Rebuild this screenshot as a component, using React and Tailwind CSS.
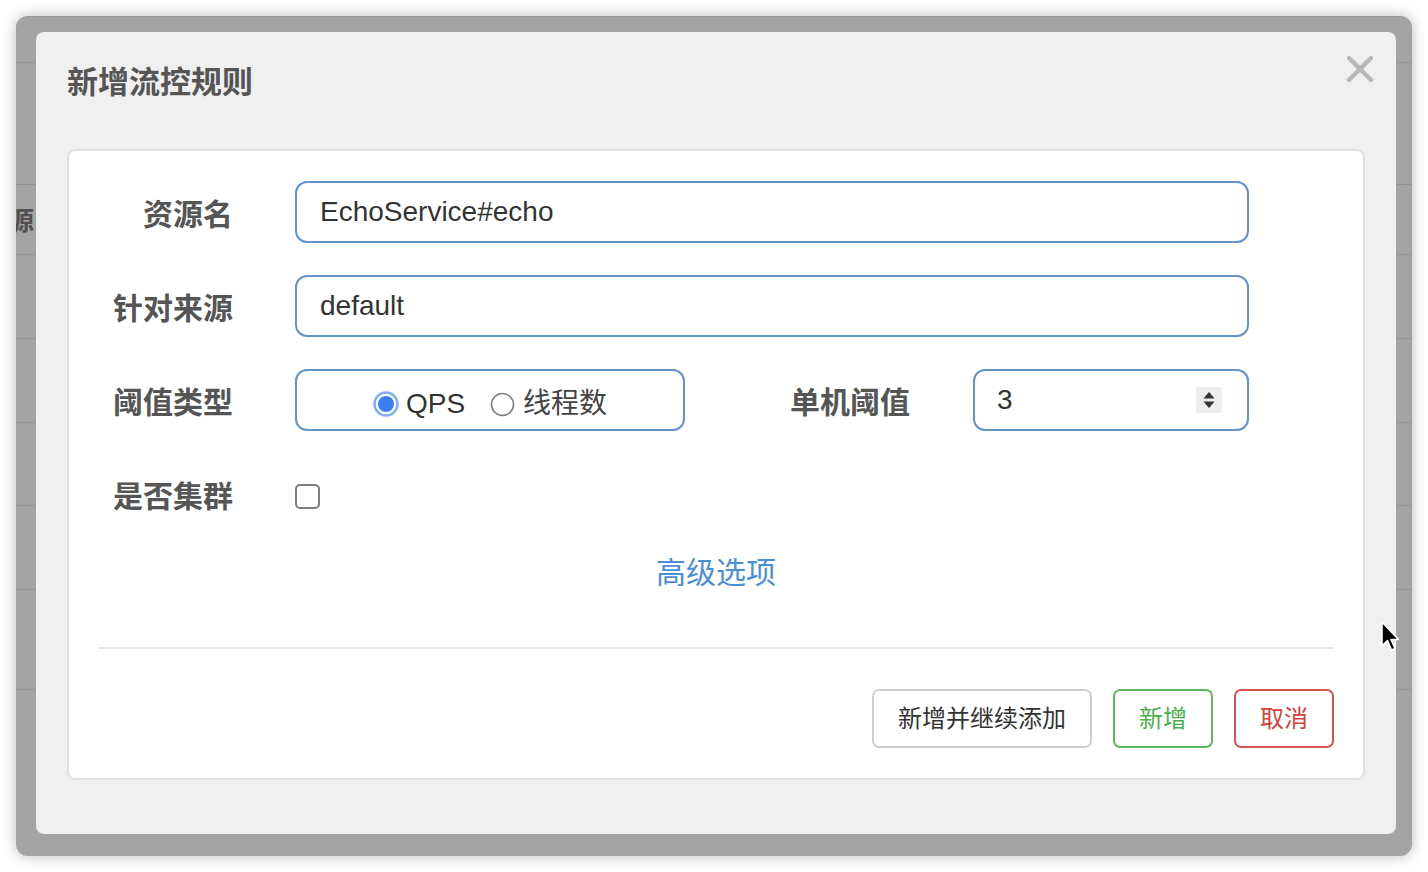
import React from "react";

const bgLines = [45, 167, 237, 321, 405, 488, 572, 672];

const RadioOn = () => (
  <svg width="26" height="26" viewBox="0 0 26 26">
    <circle cx="13" cy="13" r="11.5" fill="#fff" stroke="#7fb0f6" strokeWidth="2.5" />
    <circle cx="13" cy="13" r="8" fill="#3b7ef2" />
  </svg>
);

const RadioOff = () => (
  <svg width="25" height="25" viewBox="0 0 25 25">
    <circle cx="12.5" cy="12.5" r="11" fill="#fff" stroke="#7a7a7a" strokeWidth="1.5" />
  </svg>
);

const Label = ({ children, className = "" }) => (
  <div className={`text-right text-[30px] leading-[40px] pt-[6px] font-bold text-[#555] ${className}`}>
    {children}
  </div>
);

export default function App() {
  return (
    <div className="w-[1428px] h-[872px] bg-white p-[16px] font-['Liberation_Sans','Noto_Sans_CJK_SC',sans-serif] relative">
      {/* dimmed page behind the modal */}
      <div className="relative w-[1396px] h-[840px] rounded-[12px] bg-[#a4a4a4] border-t border-[#999] shadow-[0_0_14px_rgba(0,0,0,0.28)] overflow-hidden pl-[20px] pt-[15px]">
        <div className="absolute inset-0">
          {bgLines.map((t) => (
            <div key={t} className="absolute left-0 right-0 h-[1px] bg-[#949494]" style={{ top: t }} />
          ))}
          <div className="absolute left-[-8px] top-[188px] text-[26px] leading-[32px] font-bold text-[#4f4f4f]">源</div>
        </div>

        {/* dialog */}
        <div className="relative w-[1360px] h-[802px] rounded-[8px] bg-[#f0f0f0]">
          <div className="flex justify-between items-start pl-[31px] pr-[23px] pt-[24px]">
            <div className="mt-[7px] text-[31px] leading-[40px] font-bold text-[#555]">新增流控规则</div>
            <svg width="26" height="26" viewBox="0 0 26 26">
              <path d="M2 2 L24 24 M24 2 L2 24" stroke="#b8b8b8" strokeWidth="4.5" strokeLinecap="round" />
            </svg>
          </div>

          <div className="ml-[31px] mt-[46px] w-[1298px] h-[631px] bg-white border-2 border-[#e0e0e0] rounded-[8px] pt-[30px]">
            <div className="flex items-center h-[62px]">
              <Label className="w-[164px]">资源名</Label>
              <div className="ml-[62px] w-[954px] h-[62px] border-2 border-[#6392cf] rounded-[12px] flex items-center pl-[23px] text-[28px] text-[#333]">
                EchoService#echo
              </div>
            </div>

            <div className="flex items-center h-[62px] mt-[32px]">
              <Label className="w-[164px]">针对来源</Label>
              <div className="ml-[62px] w-[954px] h-[62px] border-2 border-[#6392cf] rounded-[12px] flex items-center pl-[23px] text-[28px] text-[#333]">
                default
              </div>
            </div>

            <div className="flex items-center h-[62px] mt-[32px]">
              <Label className="w-[164px]">阈值类型</Label>
              <div className="ml-[62px] w-[390px] h-[62px] border-2 border-[#6392cf] rounded-[12px] flex items-center justify-center text-[28px] text-[#333] pt-[8px]">
                <RadioOn />
                <span className="ml-[7px]">QPS</span>
                <span className="ml-[25px]">
                  <RadioOff />
                </span>
                <span className="ml-[8px] text-[#444]">线程数</span>
              </div>
              <Label className="w-[225px]">单机阈值</Label>
              <div className="ml-[63px] w-[276px] h-[62px] border-2 border-[#6392cf] rounded-[12px] flex items-center justify-between pl-[22px] pr-[25px] text-[28px] text-[#333]">
                <span>3</span>
                <div className="w-[26px] h-[26px] bg-[#ededed] rounded-[3px] flex items-center justify-center">
                  <svg width="14" height="20" viewBox="0 0 14 20">
                    <path d="M7 2 L12.5 8.5 L1.5 8.5 Z M7 18 L12.5 11.5 L1.5 11.5 Z" fill="#333" />
                  </svg>
                </div>
              </div>
            </div>

            <div className="flex items-center h-[62px] mt-[32px]">
              <Label className="w-[164px]">是否集群</Label>
              <div className="ml-[62px] mt-[4px] w-[25px] h-[25px] border-2 border-[#7d7d7d] rounded-[5px] bg-white" />
            </div>

            <div className="mt-[28px] text-center text-[30px] leading-[40px] text-[#4a8fd6]">高级选项</div>

            <div className="px-[29px]">
              <div className="mt-[54px] h-[2px] bg-[#e8e8e8]" />
              <div className="mt-[40px] flex justify-end gap-[21px]">
                <div className="h-[59px] px-[24px] border-2 border-[#cfcfcf] rounded-[7px] flex items-center text-[24px] text-[#333]">
                  新增并继续添加
                </div>
                <div className="h-[59px] px-[24px] border-2 border-[#5cb85c] rounded-[7px] flex items-center text-[24px] text-[#4cae4c]">
                  新增
                </div>
                <div className="h-[59px] px-[24px] border-2 border-[#d9534f] rounded-[7px] flex items-center text-[24px] text-[#d43f3a]">
                  取消
                </div>
              </div>
            </div>
          </div>
        </div>
      </div>

      {/* mouse pointer */}
      <svg className="absolute left-[1380px] top-[620px]" width="22" height="34" viewBox="0 0 22 34">
        <path d="M2 2 L2 26 L7.5 20.5 L11.5 30 L15 28.5 L11 19.5 L18.5 19.5 Z" fill="#000" stroke="#fff" strokeWidth="1.6" strokeLinejoin="round" />
      </svg>
    </div>
  );
}
